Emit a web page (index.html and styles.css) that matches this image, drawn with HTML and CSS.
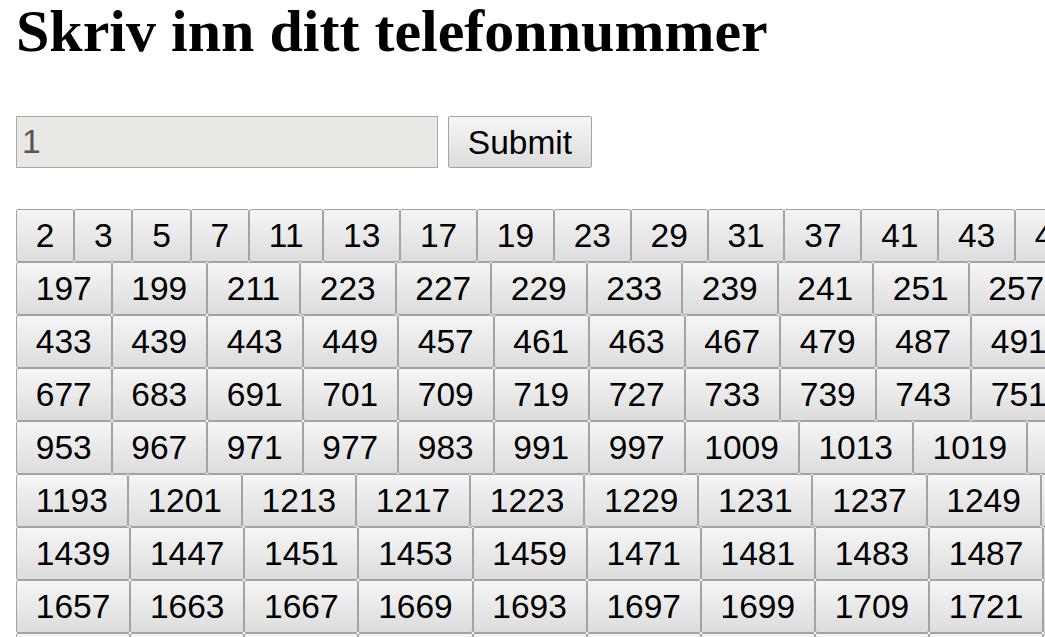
FILE: index.html
```html
<!DOCTYPE html>
<html lang="no">
<head>
  <meta charset="UTF-8" />
  <title>Telefonnummer</title>
  <link rel="stylesheet" href="styles.css">
</head>
<body>

<h1>Skriv inn ditt telefonnummer</h1>

<form id="phone-form" class="phone-form">
  <input type="text" id="phone" class="phone-input" value="1" />
  <button type="submit" class="btn">Submit</button>
</form>

<div id="board" class="board"></div>

<script>
  // each row starts at these primes
  const rowStarts = [2, 197, 433, 677, 953, 1193, 1439, 1657, 1901, 2000];

  function isPrime(n) {
    if (n < 2) return false;
    for (let i = 2; i * i <= n; i++) {
      if (n % i === 0) return false;
    }
    return true;
  }

  const board = document.getElementById("board");

  for (let r = 0; r < rowStarts.length - 1; r++) {
    const row = document.createElement("div");
    row.className = "board-row";
    for (let n = rowStarts[r]; n < rowStarts[r + 1]; n++) {
      if (!isPrime(n)) continue;
      const b = document.createElement("button");
      b.className = "btn num";
      b.textContent = n;
      row.appendChild(b);
    }
    board.appendChild(row);
  }

  document.getElementById("phone-form").addEventListener("submit", function (e) {
    e.preventDefault();
  });
</script>

</body>
</html>
```

FILE: styles.css
```css
html, body {
  overflow: hidden;
}
body {
  margin: 0;
  padding: 0 0 0 16px;
  background: #fff;
  font-family: "Liberation Sans", Arial, sans-serif;
}
h1 {
  margin: 0;
  font-family: "Liberation Serif", "Times New Roman", serif;
  font-size: 60px;
  line-height: 63px;
  font-weight: bold;
  color: #000;
}
.phone-form {
  display: flex;
  gap: 10px;
  margin-top: 53px;
}
.phone-input {
  box-sizing: border-box;
  width: 422px;
  height: 52px;
  margin: 0;
  padding: 0 5px;
  border: 1px solid #a9a9a9;
  background: #e9e8e4;
  color: #555;
  font-family: "Liberation Sans", Arial, sans-serif;
  font-size: 33.5px;
}
.btn {
  box-sizing: border-box;
  margin: 0;
  padding: 6px 18.8px;
  border: 1px solid #a3a3a3;
  border-radius: 2px;
  background: linear-gradient(#f6f6f6, #dcdcdc);
  color: #000;
  font-family: "Liberation Sans", Arial, sans-serif;
  font-size: 33.5px;
  line-height: 39px;
}
.phone-form .btn {
  height: 52px;
}
.board {
  margin-top: 41px;
  overflow: hidden;
}
.board-row {
  display: flex;
  flex-wrap: nowrap;
}
.num {
  flex: none;
  height: 53px;
}
```
